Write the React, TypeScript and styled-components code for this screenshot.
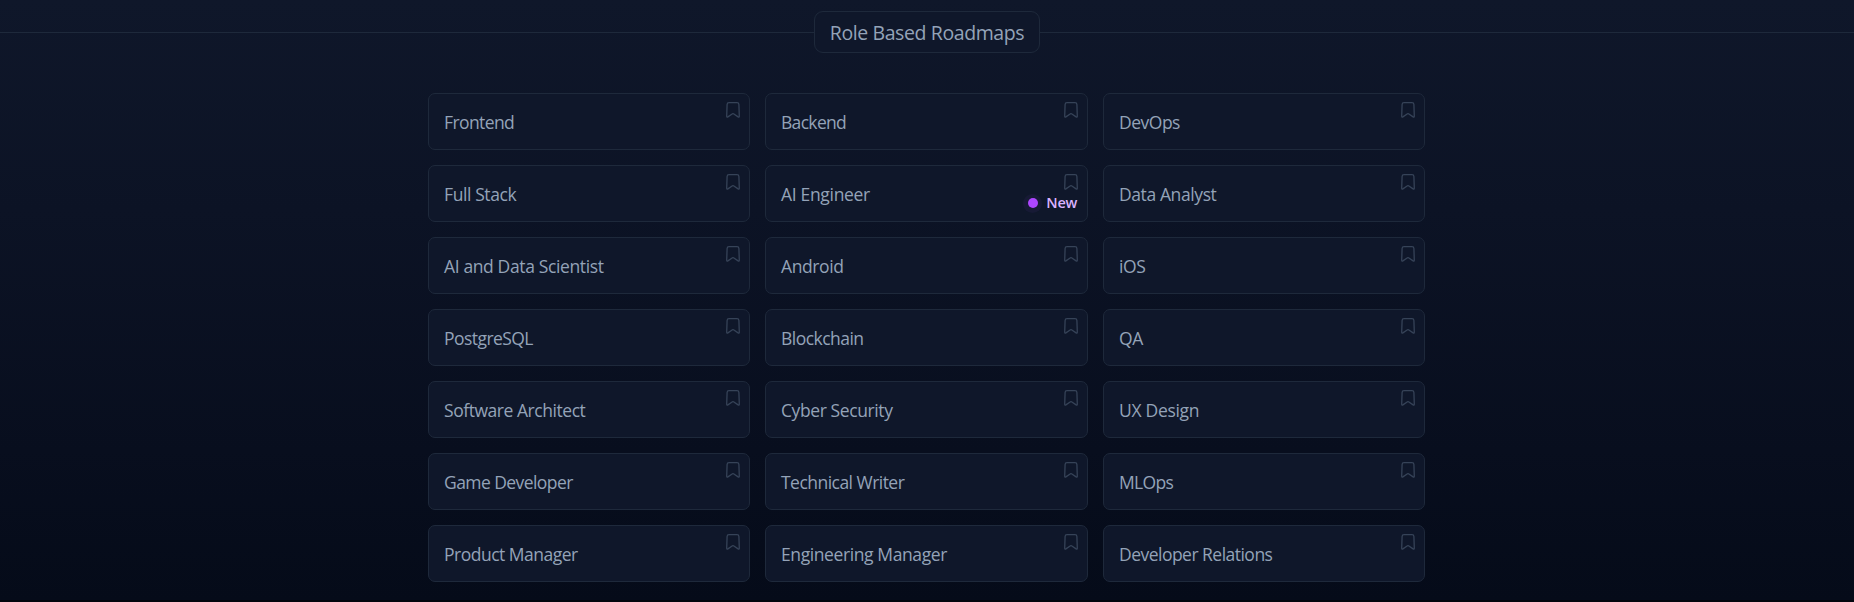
import React from "react";
import styled, { createGlobalStyle } from "styled-components";

const GlobalStyle = createGlobalStyle`
  * { box-sizing: border-box; }
  body { margin: 0; background: #02050d; }
`;

const Page = styled.main`
  height: 602px;
  overflow: hidden;
  padding-top: 11px;
  border-bottom: 2px solid #02050d;
  background: linear-gradient(180deg, #0f172a 0%, #0c1325 35%, #080e1e 75%, #050b19 100%);
  font-family: "Segoe UI", "Open Sans", "Noto Sans", sans-serif;
`;

const Header = styled.header`
  display: flex;
  align-items: center;
  height: 42px;
`;

const Rule = styled.span`
  flex: 1;
  height: 1px;
  background: #1e293b;
`;

const Title = styled.h2`
  margin: 0;
  width: 226px;
  height: 42px;
  display: flex;
  align-items: center;
  justify-content: center;
  border: 1px solid #1e293b;
  border-radius: 9px;
  background: #0f172a;
  color: #94a3b8;
  font-size: 19.5px;
  font-weight: 400;
  letter-spacing: -0.4px;
  white-space: nowrap;
`;

const Grid = styled.div`
  display: grid;
  grid-template-columns: 322px 323px 322px;
  grid-auto-rows: 57px;
  gap: 15px;
  width: 998px;
  margin: 40px auto 0;
`;

const Card = styled.div`
  position: relative;
  display: flex;
  align-items: center;
  padding-left: 15px;
  border: 1px solid #1e293b;
  border-radius: 7px;
  background: #0f172a;
  color: #94a3b8;
`;

const Label = styled.span<{ $tracking: number }>`
  font-size: 17.5px;
  line-height: 26px;
  letter-spacing: ${(p) => p.$tracking}px;
  white-space: nowrap;
`;

const Bookmark = styled.svg`
  position: absolute;
  top: 8px;
  right: 9px;
  width: 14px;
  height: 16px;
  color: #364358;
`;

const NewBadge = styled.span`
  position: absolute;
  right: 10px;
  bottom: 8px;
  display: flex;
  align-items: center;
  gap: 4px;
  color: #dab2ff;
  font-size: 14.5px;
  line-height: 20px;
  font-weight: 600;
  letter-spacing: -0.3px;
`;

const Halo = styled.span`
  display: grid;
  place-items: center;
  width: 19px;
  height: 19px;
  border-radius: 50%;
  background: #171a35;
`;

const Dot = styled.span`
  width: 10px;
  height: 10px;
  border-radius: 50%;
  background: #ad46ff;
`;

type Role = { name: string; tracking?: number; isNew?: boolean };

const roles: Role[] = [
  { name: "Frontend", tracking: -0.6 },
  { name: "Backend", tracking: -0.68 },
  { name: "DevOps", tracking: -0.5 },
  { name: "Full Stack" },
  { name: "AI Engineer", tracking: -0.32, isNew: true },
  { name: "Data Analyst" },
  { name: "AI and Data Scientist", tracking: -0.37 },
  { name: "Android" },
  { name: "iOS" },
  { name: "PostgreSQL", tracking: -0.55 },
  { name: "Blockchain", tracking: -0.53 },
  { name: "QA" },
  { name: "Software Architect", tracking: -0.45 },
  { name: "Cyber Security" },
  { name: "UX Design", tracking: -0.3 },
  { name: "Game Developer", tracking: -0.57 },
  { name: "Technical Writer", tracking: -0.53 },
  { name: "MLOps", tracking: -0.7 },
  { name: "Product Manager", tracking: -0.5 },
  { name: "Engineering Manager" },
  { name: "Developer Relations", tracking: -0.52 },
];

const BookmarkIcon = () => (
  <Bookmark viewBox="0 0 14 16" fill="none" stroke="currentColor" strokeWidth="1.3" strokeLinecap="round" strokeLinejoin="round">
    <path d="M3 .7H11Q12.8 .7 12.9 2.5L13.3 14.3Q13.3 15.6 12.1 14.9L7.5 11.7Q7 11.4 6.5 11.7L1.9 14.9Q.7 15.6 .7 14.3L1.1 2.5Q1.2 .7 3 .7Z" />
  </Bookmark>
);

export default function App() {
  return (
    <Page>
      <GlobalStyle />
      <Header>
        <Rule />
        <Title>Role Based Roadmaps</Title>
        <Rule />
      </Header>
      <Grid>
        {roles.map((role) => (
          <Card key={role.name}>
            <Label $tracking={role.tracking ?? -0.4}>{role.name}</Label>
            <BookmarkIcon />
            {role.isNew && (
              <NewBadge>
                <Halo>
                  <Dot />
                </Halo>
                New
              </NewBadge>
            )}
          </Card>
        ))}
      </Grid>
    </Page>
  );
}
